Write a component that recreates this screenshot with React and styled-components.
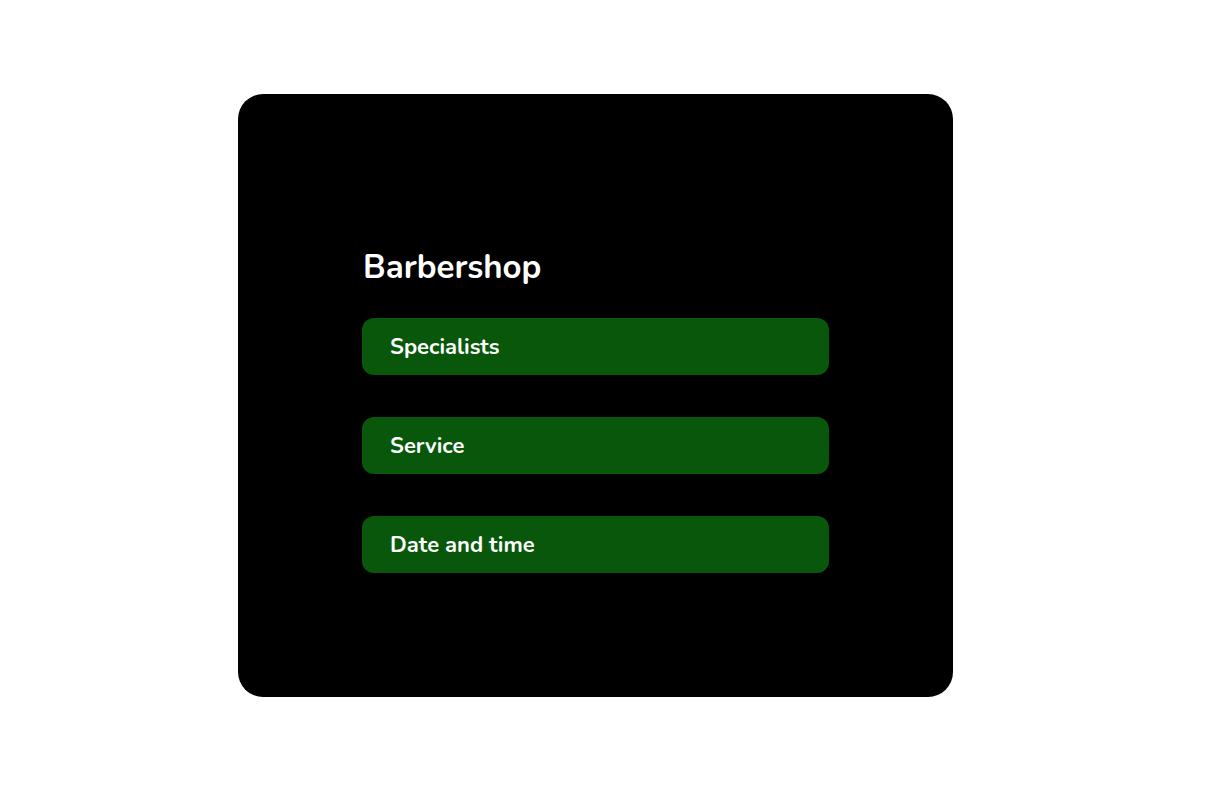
import React from "react";
import styled, { createGlobalStyle } from "styled-components";

const GlobalStyle = createGlobalStyle`
  html, body {
    margin: 0;
    padding: 0;
    background: #ffffff;
    font-family: Nunito, Lato, "Open Sans", sans-serif;
  }
`;

const Page = styled.div`
  display: flex;
  padding-top: 94px;
  padding-left: 238px;
  min-height: 792px;
  box-sizing: border-box;
`;

const Card = styled.div`
  width: 715px;
  height: 603px;
  box-sizing: border-box;
  background: #000000;
  border-radius: 25px;
  padding: 154px 124px 0 124px;
  display: flex;
  flex-direction: column;
`;

const Title = styled.h1`
  margin: 0 0 30px 0;
  font-size: 33px;
  line-height: 40px;
  font-weight: 700;
  color: #ffffff;
  padding-left: 1px;
`;

const List = styled.div`
  display: flex;
  flex-direction: column;
  gap: 42px;
`;

const Item = styled.div`
  height: 57px;
  box-sizing: border-box;
  background: #08570a;
  border-radius: 12px;
  padding-left: 28px;
  display: flex;
  align-items: center;
  font-size: 22px;
  font-weight: 700;
  color: #ffffff;
`;

const items = ["Specialists", "Service", "Date and time"];

export default function App() {
  return (
    <Page>
      <GlobalStyle />
      <Card>
        <Title>Barbershop</Title>
        <List>
          {items.map((label) => (
            <Item key={label}>{label}</Item>
          ))}
        </List>
      </Card>
    </Page>
  );
}
